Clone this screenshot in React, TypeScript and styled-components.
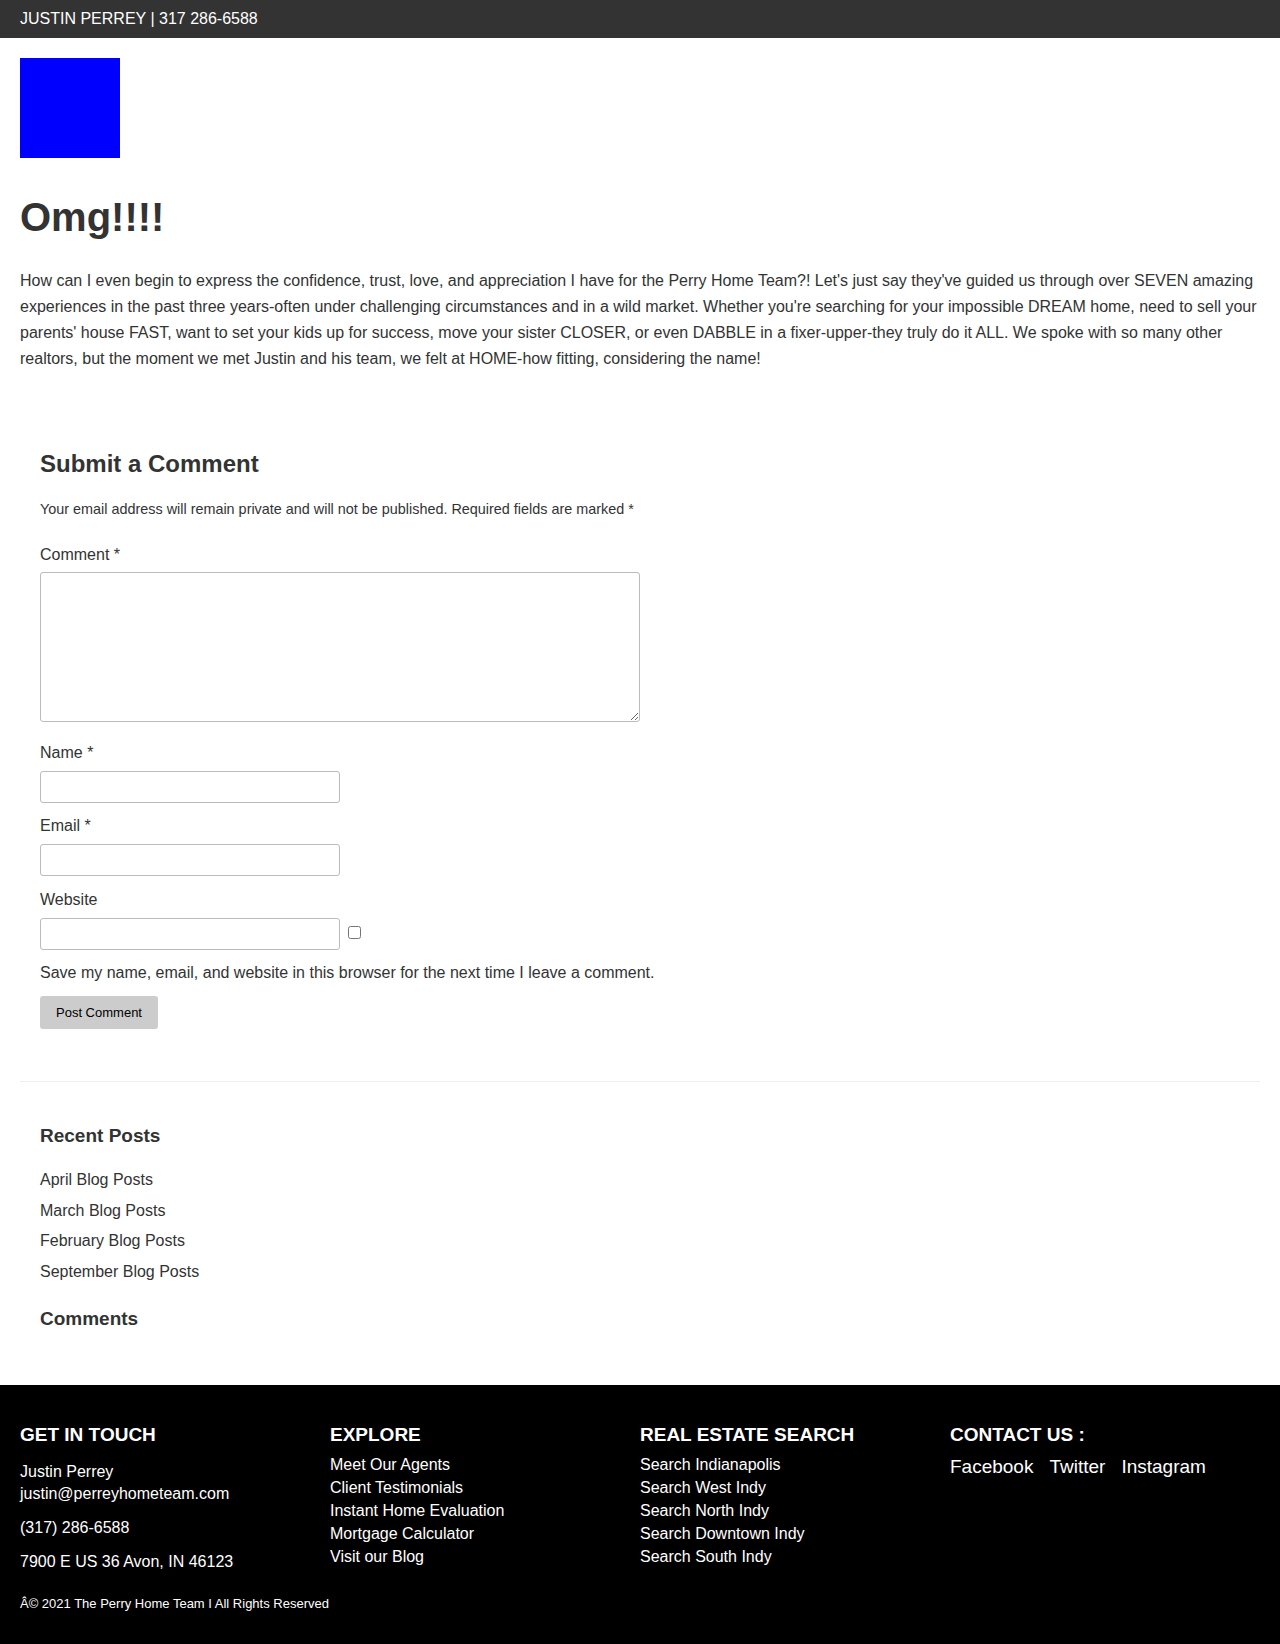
import React from "react";
import styled, { createGlobalStyle } from "styled-components";

const GlobalStyle = createGlobalStyle`
  html, body { margin: 0; padding: 0; background: #fff; }
  body {
    font-family: "Liberation Sans", Arial, Helvetica, sans-serif;
    color: #333;
    font-size: 16px;
  }
  * { box-sizing: border-box; }
`;

const TopBar = styled.header`
  height: 38px;
  background: #333;
  color: #fff;
  font-size: 16px;
  line-height: 38px;
  padding: 0 20px;
`;

const Main = styled.main`
  padding: 20px 20px 0;
`;

const Logo = styled.div`
  width: 100px;
  height: 100px;
  background: #0000ff;
`;

const Title = styled.h1`
  margin: 34px 0 0;
  font-size: 40px;
  line-height: 50px;
  font-weight: 700;
  color: #333;
`;

const Body = styled.p`
  margin: 26px 0 0;
  font-size: 16px;
  line-height: 26px;
  color: #333;
`;

const CommentSection = styled.section`
  padding: 0 20px;
  margin-top: 77px;
`;

const SectionTitle = styled.h3`
  margin: 0;
  font-size: 24px;
  line-height: 29px;
  font-weight: 700;
  color: #333;
`;

const Note = styled.p`
  margin: 20px 0 0;
  font-size: 14.4px;
  line-height: 22px;
`;

const Label = styled.label<{ $gap: number }>`
  display: block;
  margin-top: ${(p) => p.$gap}px;
  font-size: 16px;
  line-height: 26px;
`;

const TextArea = styled.textarea`
  display: block;
  margin-top: 4px;
  width: 600px;
  height: 150px;
  border: 1px solid #bbb;
  border-radius: 3px;
  font-family: inherit;
  resize: both;
`;

const FieldRow = styled.div<{ $gap: number }>`
  display: flex;
  align-items: center;
  gap: 8px;
  margin-top: ${(p) => p.$gap}px;
`;

const TextInput = styled.input`
  display: block;
  width: 300px;
  height: 32px;
  border: 1px solid #bbb;
  border-radius: 3px;
  font-family: inherit;
  font-size: 16px;
  padding: 4px 6px;
`;

const Check = styled.input`
  width: 13px;
  height: 13px;
  margin: 0;
  position: relative;
  top: -2px;
`;

const SaveText = styled.p`
  margin: 10px 0 0;
  font-size: 16px;
  line-height: 26px;
`;

const SubmitButton = styled.button`
  display: block;
  margin-top: 10px;
  height: 33px;
  padding: 0 16px;
  background: #ccc;
  color: #000;
  border: none;
  border-radius: 3px;
  font-family: inherit;
  font-size: 13px;
`;

const Divider = styled.hr`
  margin: 52px 0 0;
  border: none;
  border-top: 1px solid #eee;
`;

const Sidebar = styled.aside`
  padding: 0 20px;
`;

const WidgetTitle = styled.h4<{ $gap: number }>`
  margin: ${(p) => p.$gap}px 0 0;
  font-size: 19px;
  line-height: 23px;
  font-weight: 700;
  color: #333;
`;

const PostList = styled.ul`
  list-style: none;
  margin: 18px 0 0;
  padding: 0;
`;

const PostItem = styled.li`
  font-size: 16px;
  line-height: 30.7px;
  color: #333;
`;

const Footer = styled.footer`
  margin-top: 55px;
  background: #000;
  color: #fff;
  padding: 38px 20px 33px;
`;

const FooterGrid = styled.div`
  display: grid;
  grid-template-columns: repeat(4, 1fr);
`;

const FooterCol = styled.div``;

const FooterHeading = styled.h4`
  margin: 0;
  font-size: 19px;
  line-height: 23px;
  font-weight: 700;
`;

const ContactText = styled.p<{ $gap: number }>`
  margin: ${(p) => p.$gap}px 0 0;
  font-size: 16px;
  line-height: 22px;
`;

const FooterList = styled.ul`
  list-style: none;
  margin: 7px 0 0;
  padding: 0;
`;

const FooterItem = styled.li`
  font-size: 16px;
  line-height: 23px;
`;

const SocialRow = styled.div`
  display: flex;
  gap: 16px;
  margin-top: 9px;
  font-size: 19px;
  line-height: 23px;
`;

const Copyright = styled.p`
  margin: 23px 0 0;
  font-size: 13px;
  line-height: 15px;
`;

export default function App() {
  return (
    <>
      <GlobalStyle />
      <TopBar>JUSTIN PERREY | 317 286-6588</TopBar>
      <Main>
        <Logo />
        <Title>Omg!!!!</Title>
        <Body>
          How can I even begin to express the confidence, trust, love, and appreciation I have for the
          Perry Home Team?! Let's just say they've guided us through over SEVEN amazing experiences in
          the past three years-often under challenging circumstances and in a wild market. Whether
          you're searching for your impossible DREAM home, need to sell your parents' house FAST, want
          to set your kids up for success, move your sister CLOSER, or even DABBLE in a
          fixer-upper-they truly do it ALL. We spoke with so many other realtors, but the moment we met
          Justin and his team, we felt at HOME-how fitting, considering the name!
        </Body>

        <CommentSection>
          <SectionTitle>Submit a Comment</SectionTitle>
          <Note>
            Your email address will remain private and will not be published. Required fields are
            marked *
          </Note>
          <Label $gap={22}>Comment *</Label>
          <TextArea />
          <Label $gap={18}>Name *</Label>
          <FieldRow $gap={5}>
            <TextInput type="text" />
          </FieldRow>
          <Label $gap={10}>Email *</Label>
          <FieldRow $gap={5}>
            <TextInput type="email" />
          </FieldRow>
          <Label $gap={11}>Website</Label>
          <FieldRow $gap={5}>
            <TextInput type="url" />
            <Check type="checkbox" />
          </FieldRow>
          <SaveText>
            Save my name, email, and website in this browser for the next time I leave a comment.
          </SaveText>
          <SubmitButton>Post Comment</SubmitButton>
        </CommentSection>

        <Divider />

        <Sidebar>
          <WidgetTitle $gap={42}>Recent Posts</WidgetTitle>
          <PostList>
            <PostItem>April Blog Posts</PostItem>
            <PostItem>March Blog Posts</PostItem>
            <PostItem>February Blog Posts</PostItem>
            <PostItem>September Blog Posts</PostItem>
          </PostList>
          <WidgetTitle $gap={19}>Comments</WidgetTitle>
        </Sidebar>
      </Main>

      <Footer>
        <FooterGrid>
          <FooterCol>
            <FooterHeading>GET IN TOUCH</FooterHeading>
            <ContactText $gap={15}>
              Justin Perrey
              <br />
              justin@perreyhometeam.com
            </ContactText>
            <ContactText $gap={12}>(317) 286-6588</ContactText>
            <ContactText $gap={12}>7900 E US 36 Avon, IN 46123</ContactText>
          </FooterCol>
          <FooterCol>
            <FooterHeading>EXPLORE</FooterHeading>
            <FooterList>
              <FooterItem>Meet Our Agents</FooterItem>
              <FooterItem>Client Testimonials</FooterItem>
              <FooterItem>Instant Home Evaluation</FooterItem>
              <FooterItem>Mortgage Calculator</FooterItem>
              <FooterItem>Visit our Blog</FooterItem>
            </FooterList>
          </FooterCol>
          <FooterCol>
            <FooterHeading>REAL ESTATE SEARCH</FooterHeading>
            <FooterList>
              <FooterItem>Search Indianapolis</FooterItem>
              <FooterItem>Search West Indy</FooterItem>
              <FooterItem>Search North Indy</FooterItem>
              <FooterItem>Search Downtown Indy</FooterItem>
              <FooterItem>Search South Indy</FooterItem>
            </FooterList>
          </FooterCol>
          <FooterCol>
            <FooterHeading>CONTACT US :</FooterHeading>
            <SocialRow>
              <span>Facebook</span>
              <span>Twitter</span>
              <span>Instagram</span>
            </SocialRow>
          </FooterCol>
        </FooterGrid>
        <Copyright>Â© 2021 The Perry Home Team I All Rights Reserved</Copyright>
      </Footer>
    </>
  );
}
